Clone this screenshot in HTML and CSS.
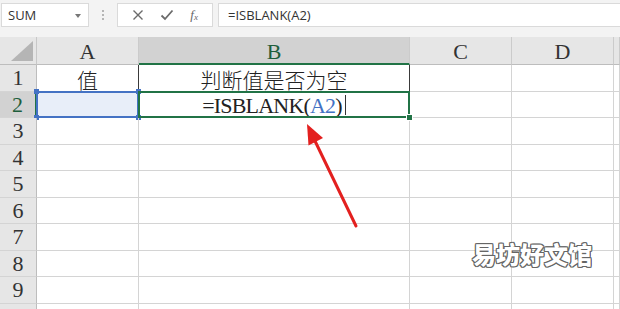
FILE: index.html
```html
<!DOCTYPE html>
<html lang="zh">
<head>
  <meta charset="UTF-8">
  <title>ISBLANK</title>
  <link rel="stylesheet" href="styles.css">
</head>
<body>
  <div class="toolbar">
    <div class="namebox">SUM<span class="caret"></span></div>
    <div class="dots"><i></i><i></i><i></i></div>
    <div class="fbuttons">
      <svg width="12" height="12" viewBox="0 0 12 12"><path d="M1.5 1.5 L10.5 10.5 M10.5 1.5 L1.5 10.5" stroke="#6b6b6b" stroke-width="1.4" fill="none"/></svg>
      <svg width="14" height="12" viewBox="0 0 14 12"><path d="M1.5 6.5 L5 10 L12.5 1.5" stroke="#6b6b6b" stroke-width="1.8" fill="none"/></svg>
      <span class="fx">f<sub>x</sub></span>
    </div>
    <div class="formula">=ISBLANK(A2)</div>
  </div>

  <div class="sheet">
    <div class="corner"><span class="tri"></span></div>
    <div class="ch">A</div>
    <div class="ch sel">B</div>
    <div class="ch">C</div>
    <div class="ch">D</div>
    <div class="ch"></div>

    <div class="rh">1</div>
    <div class="c cjk dark">值</div>
    <div class="c cjk dark">判断值是否为空</div>
    <div class="c"></div><div class="c"></div><div class="c"></div>

    <div class="rh sel">2</div>
    <div class="c ref"><b class="h tl"></b><b class="h tr"></b><b class="h bl"></b><b class="h br"></b></div>
    <div class="c active"><span class="edit">=ISBLANK(<span class="argref">A2</span>)</span><span class="cursor"></span></div>
    <div class="c"></div><div class="c"></div><div class="c"></div>

    <div class="rh">3</div><div class="c"></div><div class="c"></div><div class="c"></div><div class="c"></div><div class="c"></div>
    <div class="rh">4</div><div class="c"></div><div class="c"></div><div class="c"></div><div class="c"></div><div class="c"></div>
    <div class="rh">5</div><div class="c"></div><div class="c"></div><div class="c"></div><div class="c"></div><div class="c"></div>
    <div class="rh">6</div><div class="c"></div><div class="c"></div><div class="c"></div><div class="c"></div><div class="c"></div>
    <div class="rh">7</div><div class="c"></div><div class="c"></div><div class="c"></div><div class="c"></div><div class="c"></div>
    <div class="rh">8</div><div class="c"></div><div class="c"></div><div class="c"></div><div class="c"></div><div class="c"></div>
    <div class="rh">9</div><div class="c"></div><div class="c"></div><div class="c"></div><div class="c"></div><div class="c"></div>
    <div class="rh"></div><div class="c"></div><div class="c"></div><div class="c"></div><div class="c"></div><div class="c"></div>
  </div>

  <svg class="arrow" width="620" height="309" viewBox="0 0 620 309">
    <line x1="356" y1="226" x2="315" y2="141" stroke="#e3201f" stroke-width="3" stroke-linecap="round"/>
    <polygon points="307,124 323,138 308.5,145.5" fill="#e3201f"/>
  </svg>
  <div class="watermark">易坊好文馆</div>
</body>
</html>
```

FILE: styles.css
```css
body {
  margin: 0;
  width: 620px;
  height: 309px;
  overflow: hidden;
  background: #fff;
  font-family: "Liberation Serif", "Noto Sans CJK SC", serif;
  position: relative;
}
.toolbar {
  height: 37px;
  background: #f3f3f3;
  display: flex;
  align-items: flex-start;
  padding-top: 3px;
  box-sizing: border-box;
  font-family: "Open Sans", "Liberation Sans", sans-serif;
  font-size: 13px;
  color: #333;
}
.namebox {
  margin-left: 1px;
  width: 88px;
  height: 24px;
  box-sizing: border-box;
  background: #fff;
  border: 1px solid #dadada;
  display: flex;
  align-items: center;
  padding-left: 6px;
  position: relative;
}
.caret {
  position: absolute;
  right: 7px;
  top: 10px;
  border-left: 3px solid transparent;
  border-right: 3px solid transparent;
  border-top: 4px solid #777;
}
.dots {
  width: 28px;
  height: 24px;
  display: flex;
  flex-direction: column;
  align-items: center;
  justify-content: center;
  gap: 2px;
}
.dots i {
  width: 2px;
  height: 2px;
  background: #b5b5b5;
}
.fbuttons {
  width: 96px;
  height: 24px;
  box-sizing: border-box;
  background: #fff;
  border: 1px solid #dadada;
  display: flex;
  align-items: center;
  justify-content: space-around;
  padding: 0 6px;
}
.fx {
  font-family: "Liberation Serif", serif;
  font-style: italic;
  font-size: 13px;
  color: #666;
}
.fx sub {
  font-size: 9px;
  vertical-align: -1px;
}
.formula {
  margin-left: 5px;
  flex: 1;
  height: 24px;
  box-sizing: border-box;
  background: #fff;
  border: 1px solid #dadada;
  border-right: none;
  display: flex;
  align-items: center;
  padding-left: 9px;
}

.sheet {
  display: grid;
  grid-template-columns: 37px 102px 271px 102px 102px 1fr;
  grid-template-rows: 28px 27px 26px 27px 26px 27px 26px 27px 26px 27px 26px;
  font-size: 22px;
}
.corner, .ch, .rh, .c {
  box-sizing: border-box;
  display: flex;
  align-items: center;
  justify-content: center;
  position: relative;
}
.corner {
  background: #e6e6e6;
  border-right: 1px solid #c8c8c8;
  border-bottom: 1px solid #bdbdbd;
}
.tri {
  position: absolute;
  right: 3px;
  bottom: 3px;
  border-left: 22px solid transparent;
  border-bottom: 20px solid #b5b5b5;
}
.ch {
  background: #e6e6e6;
  border-right: 1px solid #cbcbcb;
  border-bottom: 1px solid #bdbdbd;
  color: #333;
  padding-top: 3px;
}
.rh {
  background: #e6e6e6;
  border-right: 1px solid #bdbdbd;
  border-bottom: 1px solid #d4d4d4;
  color: #333;
}
.ch.sel {
  background: #d2d2d2;
  border-bottom: 2px solid #217346;
  color: #1e5e3b;
}
.rh.sel {
  background: #d2d2d2;
  border-right: 2px solid #217346;
  color: #1e5e3b;
}
.c {
  border-right: 1px solid #d4d4d4;
  border-bottom: 1px solid #d4d4d4;
  color: #222;
}
.cjk {
  font-family: "Noto Sans CJK SC", sans-serif;
  font-size: 21px;
  font-weight: 300;
  padding-top: 2px;
}
.dark {
  border-right-color: #3a3a3a;
}
.ref {
  background: #e8eef9;
}
.ref::before {
  content: "";
  position: absolute;
  left: -1px;
  top: -1px;
  right: -1px;
  bottom: -1px;
  border: 2px solid #4472c4;
}
.h {
  position: absolute;
  width: 5px;
  height: 5px;
  background: #4472c4;
}
.tl { left: -3px; top: -3px; }
.tr { right: -3px; top: -3px; }
.bl { left: -3px; bottom: -3px; }
.br { right: -3px; bottom: -3px; }
.active::after {
  content: "";
  position: absolute;
  left: -1px;
  top: -1px;
  right: -1px;
  bottom: -1px;
  border: 2px solid #217346;
}
.active::before {
  content: "";
  position: absolute;
  right: -4px;
  bottom: -4px;
  width: 5px;
  height: 5px;
  background: #217346;
  border: 1px solid #fff;
  z-index: 2;
}
.edit {
  letter-spacing: -0.8px;
  padding-top: 2px;
}
.argref {
  color: #4472c4;
}
.cursor {
  width: 1px;
  height: 20px;
  background: #333;
  margin-left: 3px;
}
.arrow {
  position: absolute;
  left: 0;
  top: 0;
}
.watermark {
  position: absolute;
  left: 472px;
  top: 242px;
  font-family: "Noto Sans CJK SC", sans-serif;
  font-size: 24px;
  font-weight: 900;
  line-height: 1;
  color: #fff;
  text-shadow: 1px 0 0 #666, -1px 0 0 #666, 0 1px 0 #666, 0 -1px 0 #666,
    1px 1px 0 #666, -1px -1px 0 #666, 1px -1px 0 #666, -1px 1px 0 #666;
}
```
